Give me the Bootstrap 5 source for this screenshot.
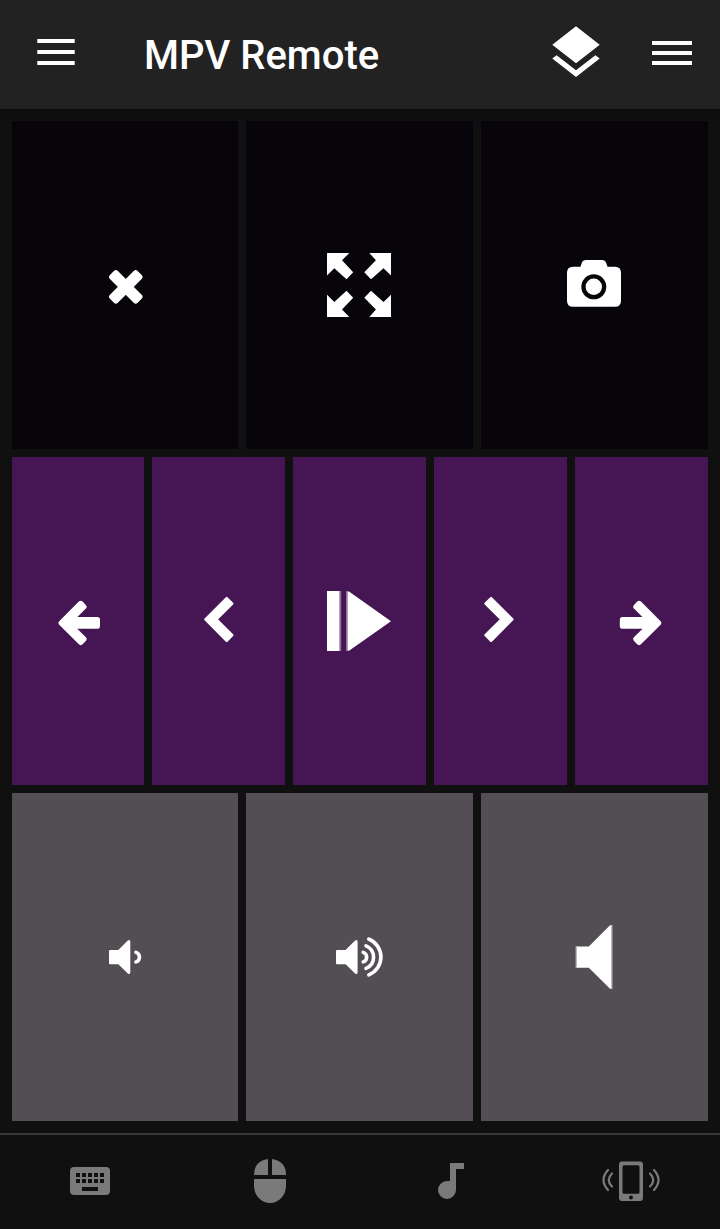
<!DOCTYPE html>
<html lang="en" data-bs-theme="dark">
<head>
<meta charset="utf-8">
<meta name="viewport" content="width=device-width, initial-scale=1">
<title>MPV Remote</title>
<link href="https://cdn.jsdelivr.net/npm/bootstrap@5.3.0/dist/css/bootstrap.min.css" rel="stylesheet">
<style>
  body { background: #101010; font-family: Roboto, "Liberation Sans", sans-serif; height: 1229px; overflow: hidden; }
  .app-header { height: 109px; background: #222; box-shadow: 0 1px 6px rgba(0,0,0,.55); padding: 0 28px 0 37px; }
  .app-title { font-size: 40px; font-weight: 500; line-height: 48px; color: #fff; margin-left: 69px; padding-top: 2px; }
  .icon-btn { padding: 0; border: 0; line-height: 0; color: #fff; border-radius: 0; }
  .icon-btn svg { display: block; fill: currentColor; flex: none; }
  .layers { margin-right: 52px; }
  .pad { padding: 12px; gap: 8px; }
  .pad-row { gap: 8px; }
  .tile { flex: 1 1 0; min-width: 0; }
  .pad-row > .tile:first-child { flex: 0 0 226px; }
  .pad-row > .tile-purple:first-child { flex-basis: 132px; }
  .tile-black { background: #070509; }
  .tile-purple { background: #451653; }
  .tile-gray { background: #534e54; }
  .tab-strip { height: 96px; border-top: 2px solid #383838; }
  .tab-strip .icon-btn { color: #7a7a7a; }
  .wave { fill: none; stroke: currentColor; stroke-linecap: round; }
</style>
</head>
<body class="d-flex flex-column">
<header class="app-header d-flex align-items-center flex-shrink-0">
  <button class="btn icon-btn" aria-label="Menu">
    <svg width="38" height="60" viewBox="37 25 38 60"><path d="M37.3 39h37.4v4H37.3zM37.3 50h37.4v4H37.3zM37.3 61h37.4v4H37.3z"/></svg>
  </button>
  <h1 class="app-title mb-0 me-auto">MPV Remote</h1>
  <button class="btn icon-btn layers" aria-label="Layers">
    <svg width="48" height="60" viewBox="552 25 48 60"><path d="M576 26.200L599.700 44.700 576 63.300 552.300 44.700zM552.300 58.400L556.600 55.200 576 70.200 595.400 55.200 599.700 58.400 576 77z"/></svg>
  </button>
  <button class="btn icon-btn" aria-label="Options">
    <svg width="40" height="60" viewBox="652 25 40 60"><path d="M652 41h40v4h-40zM652 51h40v4h-40zM652 61h40v4h-40z"/></svg>
  </button>
</header>

<main class="pad d-flex flex-column flex-grow-1">
  <div class="pad-row d-flex flex-fill">
    <button class="btn icon-btn tile tile-black d-flex align-items-center justify-content-center" aria-label="Close">
      <svg width="72" height="72" viewBox="89 249 72 72"><g transform="translate(125.8 286.8) rotate(45)"><rect x="-19.6" y="-5.600" width="39.200" height="11.200" rx="2.800"/><rect x="-5.600" y="-19.600" width="11.200" height="39.200" rx="2.800"/></g></svg>
    </button>
    <button class="btn icon-btn tile tile-black d-flex align-items-center justify-content-center" aria-label="Fullscreen">
      <svg width="72" height="72" viewBox="324 249 72 72"><path d="M327 253H349.3L342 260.3 353.2 272.2 346.5 279.3 334.3 268.3 327 275.5zM391 253H369.3L375.9 260.3 364.3 272.2 371 279.3 383.5 268.3 391 275.5zM327 317H349.3L342 309.5 353.2 297.8 346.5 290.7 334.3 302 327 294.7zM391 317H369.3L375.9 309.5 364.3 297.8 371 290.7 383.5 302 391 294.7z"/></svg>
    </button>
    <button class="btn icon-btn tile tile-black d-flex align-items-center justify-content-center" aria-label="Screenshot">
      <svg width="72" height="72" viewBox="559 249 72 72"><path fill-rule="evenodd" d="M573 266.8H580.5L581.7 263Q582.7 260 586 260H602Q605.2 260 606.2 263L607.5 266.8H615Q621 266.8 621 272.8V300.7Q621 306.7 615 306.7H573Q567 306.7 567 300.7V272.8Q567 266.8 573 266.8zM606.3 286.8a12.5 12.5 0 1 0-25 0a12.5 12.5 0 1 0 25 0z"/><circle cx="593.8" cy="286.8" r="8.2"/></svg>
    </button>
  </div>
  <div class="pad-row d-flex flex-fill">
    <button class="btn icon-btn tile tile-purple d-flex align-items-center justify-content-center" aria-label="Back">
      <svg width="72" height="72" viewBox="42 585 72 72"><path id="arrow" stroke="currentColor" stroke-width="5.600" stroke-linejoin="round" d="M61.400 622.900L80.800 603.600 83.700 606.800 70.400 619.900H97.200V625.900H70.400L83.700 639 80.800 642.200z"/></svg>
    </button>
    <button class="btn icon-btn tile tile-purple d-flex align-items-center justify-content-center" aria-label="Previous">
      <svg width="72" height="72" viewBox="183 585 72 72"><path id="chevron" stroke="currentColor" stroke-width="2.4" stroke-linejoin="round" d="M205.4 619.3L226.7 598 232.3 603.6 216.4 619.3 232.3 635.2 226.7 640.8z"/></svg>
    </button>
    <button class="btn icon-btn tile tile-purple d-flex align-items-center justify-content-center" aria-label="Play or pause">
      <svg width="72" height="72" viewBox="324 585 72 72"><path d="M327 591H339.500V651H327zM347.500 591.500H349L391 621.3 349 650.7H347.500z"/><path fill-opacity=".4" d="M339.500 591h1.700v60h-1.700zM346 591h1.500v60h-1.500z"/></svg>
    </button>
    <button class="btn icon-btn tile tile-purple d-flex align-items-center justify-content-center" aria-label="Next">
      <svg width="72" height="72" viewBox="465 585 72 72"><use href="#chevron" transform="translate(717.8) scale(-1 1)"/></svg>
    </button>
    <button class="btn icon-btn tile tile-purple d-flex align-items-center justify-content-center" aria-label="Forward">
      <svg width="72" height="72" viewBox="606 585 72 72"><use href="#arrow" transform="translate(719.8) scale(-1 1)"/></svg>
    </button>
  </div>
  <div class="pad-row d-flex flex-fill">
    <button class="btn icon-btn tile tile-gray d-flex align-items-center justify-content-center" aria-label="Volume down">
      <svg width="72" height="72" viewBox="89 921 72 72"><path d="M110 950H118.3L127.8 940.6Q130.3 939 130.3 942V972Q130.3 975 127.8 973.5L118.3 964.3H110Q109 964.3 109 963.3V951Q109 950 110 950z"/><path class="wave" stroke-width="3.6" d="M136 952.4A5 5 0 0 1 136 961.9"/></svg>
    </button>
    <button class="btn icon-btn tile tile-gray d-flex align-items-center justify-content-center" aria-label="Volume up">
      <svg width="72" height="72" viewBox="324 921 72 72"><path d="M337 950H345.6L355.1 940.6Q357.6 939 357.6 942V972Q357.6 975 355.1 973.5L345.6 964.3H337Q336 964.3 336 963.3V951Q336 950 337 950z"/><g class="wave" stroke-width="3.6"><path d="M363.2 952.4A5 5 0 0 1 363.2 961.9"/><path d="M366 945.8A12.200 12.200 0 0 1 366 968.4"/><path d="M368.8 939.2A19.200 19.200 0 0 1 368.8 974.9"/></g></svg>
    </button>
    <button class="btn icon-btn tile tile-gray d-flex align-items-center justify-content-center" aria-label="Mute">
      <svg width="72" height="72" viewBox="559 921 72 72"><path d="M577 946.5H588.8L610 925.2H611V988.8H610L588.8 967.7H577z"/><path fill-opacity=".6" d="M575.6 946h1.4v22h-1.4zM611 925h1.5v64h-1.5z"/></svg>
    </button>
  </div>
</main>

<nav class="tab-strip d-flex flex-shrink-0">
  <button class="btn icon-btn flex-fill d-flex align-items-center justify-content-center" aria-label="Keyboard">
    <svg width="60" height="60" viewBox="60 1152 60 60"><path fill-rule="evenodd" d="M74 1167h32a4 4 0 0 1 4 4v20a4 4 0 0 1-4 4H74a4 4 0 0 1-4-4v-20a4 4 0 0 1 4-4zM76 1173v4h4v-4zm6 0v4h4v-4zm6 0v4h4v-4zm6 0v4h4v-4zm6 0v4h4v-4zM76 1179v4h4v-4zm6 0v4h4v-4zm6 0v4h4v-4zm6 0v4h4v-4zm6 0v4h4v-4zM82 1187v4h16v-4z"/></svg>
  </button>
  <button class="btn icon-btn flex-fill d-flex align-items-center justify-content-center" aria-label="Mouse">
    <svg width="60" height="60" viewBox="240 1152 60 60"><path d="M268 1159V1175H254Q254 1161 268 1159zM272 1159V1175H286Q286 1161 272 1159zM254 1179H286V1186A16 17 0 0 1 254 1186z"/></svg>
  </button>
  <button class="btn icon-btn flex-fill d-flex align-items-center justify-content-center" aria-label="Media">
    <svg width="60" height="60" viewBox="420 1152 60 60"><path d="M450 1163H464V1169H456V1190A9 9 0 1 1 447 1181H450z"/></svg>
  </button>
  <button class="btn icon-btn flex-fill d-flex align-items-center justify-content-center" aria-label="Shake">
    <svg width="60" height="60" viewBox="600 1152 60 60"><path fill-rule="evenodd" d="M622 1161.5h18a3 3 0 0 1 3 3v33.500a3 3 0 0 1-3 3h-18a3 3 0 0 1-3-3v-33.500a3 3 0 0 1 3-3zM624 1165.300a1.500 1.500 0 0 0-1.500 1.500v25.500a1.500 1.500 0 0 0 1.500 1.500h14a1.500 1.500 0 0 0 1.500-1.500v-25.500a1.500 1.500 0 0 0-1.500-1.500zM633 1197.600a2 2 0 1 0-4 0a2 2 0 1 0 4 0z"/><g class="wave" stroke-width="2.200"><path d="M608 1170Q599 1180 608 1190"/><path d="M612 1173.500Q605.500 1180 612 1186.500"/><path d="M654 1170Q663 1180 654 1190"/><path d="M650 1173.500Q656.500 1180 650 1186.500"/></g></svg>
  </button>
</nav>
<script src="https://cdn.jsdelivr.net/npm/bootstrap@5.3.0/dist/js/bootstrap.bundle.min.js"></script>
</body>
</html>
